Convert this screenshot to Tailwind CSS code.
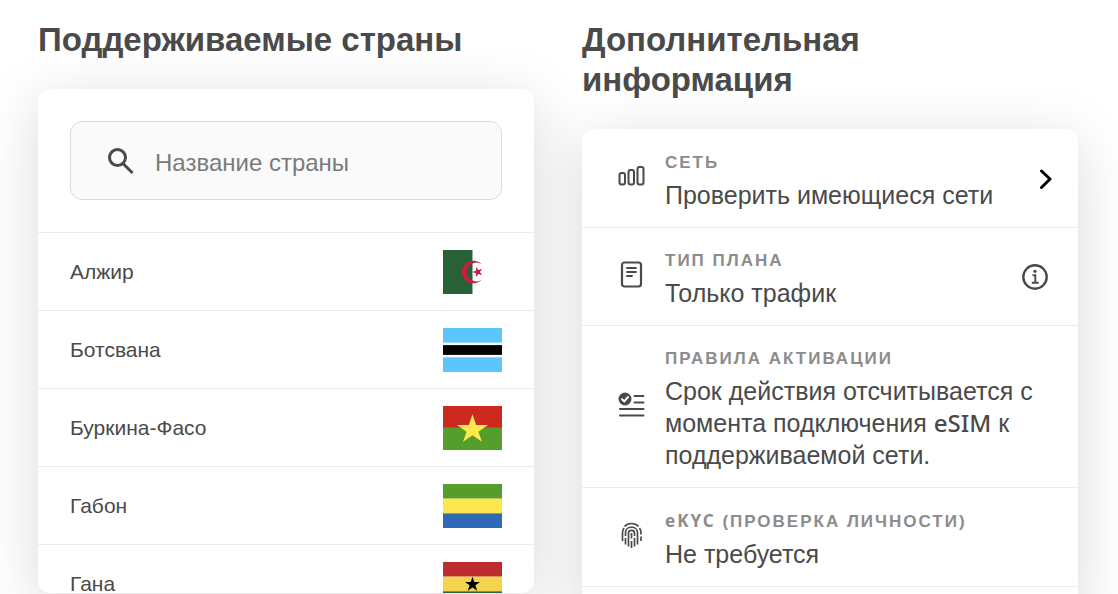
<!DOCTYPE html>
<html lang="ru">
  <head>
    <meta charset="UTF-8" />
    <title>Поддерживаемые страны</title>
    <meta name="viewport" content="width=device-width, initial-scale=1.0" />
    <script src="https://cdn.jsdelivr.net/npm/@tailwindcss/browser@4"></script>
  </head>
  <body class="bg-white font-['Liberation_Sans',Arial,sans-serif] text-[#4a4a4a] overflow-hidden">
    <main class="grid grid-cols-2 items-start gap-12 pt-5 pl-[38px] pr-10">
      <!-- Countries -->
      <section>
        <h2 class="mb-[29px] text-[33px] leading-10 font-bold">Поддерживаемые страны</h2>
        <div class="max-h-[504px] overflow-hidden rounded-xl bg-white shadow-[0_12px_60px_rgba(0,0,0,0.15)]">
          <div class="p-8">
            <label class="flex h-[79px] items-center gap-5 rounded-xl border border-[#dcdcdc] bg-[#fafafa] px-9">
              <svg class="size-7 shrink-0" viewBox="0 0 28 28" fill="none" stroke="#4a4a4a" stroke-width="3" aria-hidden="true">
                <circle cx="10.500" cy="10.500" r="8" />
                <path d="M16 16.500L25.500 26" />
              </svg>
              <input type="text" aria-label="Название страны" placeholder="Название страны" class="w-full min-w-0 bg-transparent pt-1 text-2xl outline-none placeholder:text-[#7a7a7a]" />
            </label>
          </div>
          <ul class="text-[21px]">
            <li class="flex h-[78px] items-center justify-between border-t border-[#ececec] px-8">
              <span>Алжир</span>
              <svg class="h-11 w-[59px]" viewBox="0 0 59 45" preserveAspectRatio="none" aria-hidden="true">
                <rect width="59" height="45" fill="#fff" />
                <rect width="29.500" height="45" fill="#286138" />
                <path d="M38.700 14.600A11.500 11.500 0 1 0 38.700 30.400A9.600 9.600 0 1 1 38.700 14.600Z" fill="#c5203e" />
                <path d="M29.300 22.500L33 21.200V17.300L35.400 20.400L39.200 19.200L36.900 22.500L39.200 25.800L35.400 24.600L33 27.700V23.800Z" fill="#c5203e" />
              </svg>
            </li>
            <li class="flex h-[78px] items-center justify-between border-t border-[#ececec] px-8">
              <span>Ботсвана</span>
              <svg class="h-11 w-[59px]" viewBox="0 0 59 45" preserveAspectRatio="none" aria-hidden="true">
                <rect width="59" height="45" fill="#5ac6fb" />
                <rect y="15" width="59" height="15" fill="#fff" />
                <rect y="17.500" width="59" height="10" fill="#000" />
              </svg>
            </li>
            <li class="flex h-[78px] items-center justify-between border-t border-[#ececec] px-8">
              <span>Буркина-Фасо</span>
              <svg class="h-11 w-[59px]" viewBox="0 0 59 45" preserveAspectRatio="none" aria-hidden="true">
                <rect width="59" height="22.500" fill="#cd2a1f" />
                <rect y="22" width="59" height="23" fill="#559d2c" />
                <path d="M29.500 8.500L33.100 19.500H45L35.400 26.400L39 36.500L29.500 30L20 36.500L23.600 26.400L14 19.500H25.900Z" fill="#fcea4c" />
              </svg>
            </li>
            <li class="flex h-[78px] items-center justify-between border-t border-[#ececec] px-8">
              <span>Габон</span>
              <svg class="h-11 w-[59px]" viewBox="0 0 59 45" preserveAspectRatio="none" aria-hidden="true">
                <rect width="59" height="15" fill="#559d2c" />
                <rect y="15" width="59" height="15" fill="#fce84c" />
                <rect y="30" width="59" height="15" fill="#2f6ab6" />
              </svg>
            </li>
            <li class="flex h-[78px] items-center justify-between border-t border-[#ececec] px-8">
              <span>Гана</span>
              <svg class="h-11 w-[59px]" viewBox="0 0 59 45" preserveAspectRatio="none" aria-hidden="true">
                <rect width="59" height="15" fill="#bb2b30" />
                <rect y="15" width="59" height="15" fill="#f4d44c" />
                <rect y="30" width="59" height="15" fill="#286b3b" />
                <path d="M29.500 15L31.300 20.400H37L32.400 23.800L34.200 29.500L29.500 26L24.800 29.500L26.600 23.800L22 20.400H27.700Z" fill="#000" />
              </svg>
            </li>
          </ul>
        </div>
      </section>

      <!-- Plan details -->
      <section>
        <h2 class="mb-[29px] text-[33px] leading-10 font-bold">Дополнительная информация</h2>
        <ul class="rounded-xl bg-white shadow-[0_12px_60px_rgba(0,0,0,0.15)]">
          <li class="flex items-center border-t border-transparent pt-[21px] pr-[30px] pb-4 pl-8">
            <svg class="mr-[17px] mb-1 h-[34px] w-[34px] shrink-0" viewBox="0 0 34 34" fill="none" stroke="#4a4a4a" stroke-width="2" aria-hidden="true">
              <rect x="5.500" y="11" width="5.500" height="11.500" rx="2" />
              <rect x="14.500" y="8" width="5.500" height="14.500" rx="2" />
              <rect x="23.500" y="5" width="6" height="17.500" rx="2" />
            </svg>
            <div class="grow">
              <p class="mb-1 text-[17px] leading-6 font-bold tracking-[2px] text-[#8c8c8c]">СЕТЬ</p>
              <p class="text-[25px] leading-8">Проверить имеющиеся сети</p>
            </div>
            <button type="button" aria-label="Открыть" class="-mr-1 mb-1 shrink-0">
              <svg class="h-7 w-5" viewBox="0 0 20 28" fill="none" stroke="#000" stroke-width="3" stroke-linecap="round" stroke-linejoin="round" aria-hidden="true">
                <path d="M9.500 6L18 14L9.500 22.500" />
              </svg>
            </button>
          </li>
          <li class="flex items-center border-t border-[#ececec] pt-[21px] pr-[30px] pb-4 pl-8">
            <svg class="mr-[17px] mb-1 h-[34px] w-[34px] shrink-0" viewBox="0 0 34 34" fill="none" stroke="#4a4a4a" stroke-width="2.200" stroke-linecap="round" aria-hidden="true">
              <rect x="8" y="2.500" width="19" height="24" rx="2.500" />
              <path d="M13 8H22M13 12H22M13 16H18" stroke-width="1.800" />
            </svg>
            <div class="grow">
              <p class="mb-1 text-[17px] leading-6 font-bold tracking-[2px] text-[#8c8c8c]">ТИП ПЛАНА</p>
              <p class="text-[25px] leading-8">Только трафик</p>
            </div>
            <button type="button" aria-label="Подробнее" class="mb-1 shrink-0">
              <svg class="size-[26px]" viewBox="0 0 26 26" fill="none" stroke="#4a4a4a" aria-hidden="true">
                <circle cx="13" cy="13" r="11.700" stroke-width="2.400" />
                <path d="M10.500 11.200H13.300V18.800M9.800 18.800H16.600" stroke-width="1.900" />
                <circle cx="13" cy="7.300" r="1.600" fill="#4a4a4a" stroke="none" />
              </svg>
            </button>
          </li>
          <li class="flex items-center border-t border-[#ececec] pt-[21px] pr-[30px] pb-4 pl-8">
            <svg class="mr-[17px] mb-1 h-[34px] w-[34px] shrink-0" viewBox="0 0 34 34" fill="none" stroke="#4a4a4a" stroke-width="2" stroke-linecap="round" aria-hidden="true">
              <circle cx="11" cy="9" r="6.500" fill="#4a4a4a" stroke="none" />
              <path d="M8 9.200L10.300 11.300L14 7" stroke="#fff" />
              <path d="M20.500 6H29.500M20.500 12.500H29.500M6 19H29.500M6 25.500H29.500" />
            </svg>
            <div class="grow">
              <p class="mb-1 text-[17px] leading-6 font-bold tracking-[2px] text-[#8c8c8c]">ПРАВИЛА АКТИВАЦИИ</p>
              <p class="text-[25px] leading-8">Срок действия отсчитывается с момента подключения <span class="font-['Noto_Sans',sans-serif] text-2xl leading-6 font-medium">eSIM</span> к поддерживаемой сети.</p>
            </div>
          </li>
          <li class="flex items-center border-t border-[#ececec] pt-[21px] pr-[30px] pb-4 pl-8">
            <svg class="mr-[17px] mb-1 h-[34px] w-[34px] shrink-0" viewBox="0 0 34 34" fill="none" stroke="#4a4a4a" stroke-width="1.700" aria-hidden="true">
              <path d="M10.500 5.500C14 1.500 21 1.500 24.500 5.500M8.500 20V12C8.500 10 9 8.500 10 7M25.500 7C26.500 8.500 27 10 27 12V13.500M27 15.500V20" />
              <path d="M11.500 23.500V17M11.500 15V11.500C11.500 4.500 23.500 4.500 23.500 11.500V23.500" />
              <path d="M14.500 25.500V12C14.500 8.500 20.500 8.500 20.500 12V15M20.500 17V25.500" />
              <path d="M17.500 12V17.500M17.500 20V27" />
            </svg>
            <div class="grow">
              <p class="mb-1 text-[17px] leading-6 font-bold tracking-[2px] text-[#8c8c8c]"><span class="font-['Noto_Sans',sans-serif]">eKYC</span> (ПРОВЕРКА ЛИЧНОСТИ)</p>
              <p class="text-[25px] leading-8">Не требуется</p>
            </div>
          </li>
          <li class="flex items-center border-t border-[#ececec] px-8 py-4"></li>
        </ul>
      </section>
    </main>
  </body>
</html>
